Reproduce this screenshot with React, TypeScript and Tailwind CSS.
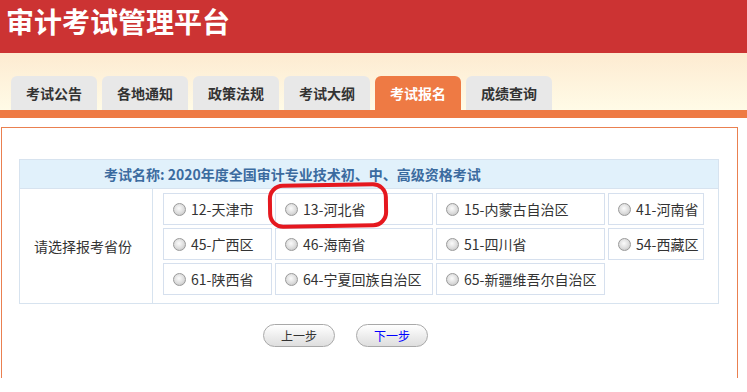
import React from "react";

const tabs = ["考试公告", "各地通知", "政策法规", "考试大纲", "考试报名", "成绩查询"];

const provinces = [
  ["12-天津市", "13-河北省", "15-内蒙古自治区", "41-河南省"],
  ["45-广西区", "46-海南省", "51-四川省", "54-西藏区"],
  ["61-陕西省", "64-宁夏回族自治区", "65-新疆维吾尔自治区"],
];

function Radio() {
  return (
    <span className="inline-block w-[13px] h-[13px] shrink-0 rounded-full border border-[#9a9a9a] bg-[radial-gradient(circle_at_45%_40%,#fbfbfb_0%,#dcdcdc_55%,#b9b9b9_100%)]" />
  );
}

export default function App() {
  return (
    <div
      className="relative w-[747px] h-[392px] overflow-hidden bg-white"
      style={{ fontFamily: '"Noto Sans CJK SC", "Noto Sans", sans-serif' }}
    >
      {/* Title band */}
      <header className="h-[53px] bg-[#cc3333] pl-[6px] pt-[3px]">
        <h1 className="text-[28px] font-bold leading-[36px] text-white">审计考试管理平台</h1>
      </header>

      {/* Tabs */}
      <nav className="h-[57px] flex items-end gap-[5px] pl-[11px] bg-gradient-to-b from-[#fdebd1] to-[#fffbe7]">
        {tabs.map((t) => (
          <div
            key={t}
            className={
              t === "考试报名"
                ? "w-[86px] h-[34px] rounded-t-[6px] bg-[#ee7a44] flex items-center justify-center text-[14px] font-bold text-white"
                : "w-[86px] h-[34px] rounded-t-[6px] bg-[#e8e8e8] flex items-center justify-center text-[14px] font-bold text-[#333]"
            }
          >
            {t}
          </div>
        ))}
      </nav>
      <div className="h-[8px] bg-[#ee7a44]" />

      {/* Content box */}
      <div className="pt-[9px] pl-[1px] pr-[9px]">
        <div className="h-[251px] border border-b-0 border-[#ea8050] pt-[31px] pl-[17px]">
          <div className="w-[700px] border border-[#d7e3ef]">
            <div className="h-[29px] bg-[#e1f1fb] border-b border-[#d7e3ef] pl-[84px] flex items-center text-[14px] font-bold text-[#3b6b9f]">
              考试名称: 2020年度全国审计专业技术初、中、高级资格考试
            </div>
            <div className="flex">
              <div className="w-[133px] shrink-0 border-r border-[#d7e3ef] flex items-center justify-center text-[14px] text-[#333] pr-[6px]">
                请选择报考省份
              </div>
              <div className="pl-[10px] pt-[4px] pb-[8px]">
                <div className="grid grid-cols-[109px_158px_169px_96px] gap-[3px]">
                  {provinces.flat().map((p) => (
                    <div
                      key={p}
                      className="h-[32px] border border-[#d6e0ee] flex items-center gap-[5px] pl-[9px] text-[14px] text-[#333]"
                    >
                      <Radio />
                      <span>{p}</span>
                    </div>
                  ))}
                </div>
              </div>
            </div>
          </div>

          <div className="flex gap-[21px] pl-[244px] mt-[20px]">
            <button className="w-[72px] h-[23px] rounded-full border border-[#a9a9a9] bg-gradient-to-b from-[#ffffff] to-[#dedede] text-[12px] text-[#333] leading-none">
              上一步
            </button>
            <button className="w-[72px] h-[23px] rounded-full border border-[#a9a9a9] bg-gradient-to-b from-[#ffffff] to-[#dedede] text-[12px] text-[#0000ff] leading-none">
              下一步
            </button>
          </div>
        </div>
      </div>

      {/* Red annotation around 13-河北省 */}
      <div className="absolute left-[268px] top-[183px] w-[120px] h-[45px] border-4 border-[#e5181f] rounded-[15px] rotate-[-1deg]" />
    </div>
  );
}
